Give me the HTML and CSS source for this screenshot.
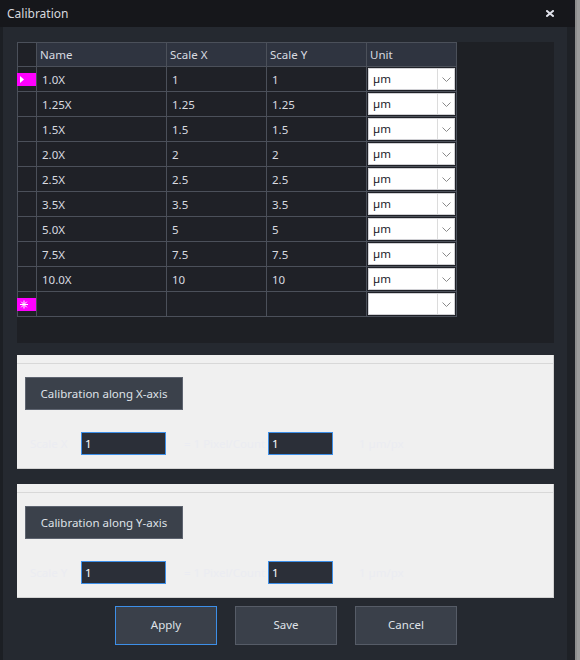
FILE: index.html
```html
<!DOCTYPE html>
<html>
<head>
<meta charset="utf-8">
<link rel="stylesheet" href="styles.css">
</head>
<body>
<div class="window">
  <div class="titlebar">
    <span class="title">Calibration</span>
    <svg class="close" width="8" height="7" viewBox="0 0 8 7"><path d="M1 1 L7 6 M7 1 L1 6" stroke="#dfe1ea" stroke-width="2" stroke-linecap="square"/></svg>
  </div>
  <div class="content">
    <div class="grid-panel">
      <div class="grid">
        <div class="hcell rh"></div>
        <div class="hcell">Name</div>
        <div class="hcell">Scale X</div>
        <div class="hcell">Scale Y</div>
        <div class="hcell">Unit</div>

        <div class="cell rh"><span class="ind"><svg width="19" height="13" viewBox="0 0 19 13"><path d="M3 3 L7 6.5 L3 10 Z" fill="#fff"/></svg></span></div>
        <div class="cell">1.0X</div><div class="cell">1</div><div class="cell">1</div>
        <div class="cell uc"><div class="combo"><span class="cv">µm</span><span class="cb"><svg width="9" height="5" viewBox="0 0 9 5"><path d="M0.5 0.5 L4.5 4.5 L8.5 0.5" fill="none" stroke="#8a8a8a"/></svg></span></div></div>

        <div class="cell rh"></div>
        <div class="cell">1.25X</div><div class="cell">1.25</div><div class="cell">1.25</div>
        <div class="cell uc"><div class="combo"><span class="cv">µm</span><span class="cb"><svg width="9" height="5" viewBox="0 0 9 5"><path d="M0.5 0.5 L4.5 4.5 L8.5 0.5" fill="none" stroke="#8a8a8a"/></svg></span></div></div>

        <div class="cell rh"></div>
        <div class="cell">1.5X</div><div class="cell">1.5</div><div class="cell">1.5</div>
        <div class="cell uc"><div class="combo"><span class="cv">µm</span><span class="cb"><svg width="9" height="5" viewBox="0 0 9 5"><path d="M0.5 0.5 L4.5 4.5 L8.5 0.5" fill="none" stroke="#8a8a8a"/></svg></span></div></div>

        <div class="cell rh"></div>
        <div class="cell">2.0X</div><div class="cell">2</div><div class="cell">2</div>
        <div class="cell uc"><div class="combo"><span class="cv">µm</span><span class="cb"><svg width="9" height="5" viewBox="0 0 9 5"><path d="M0.5 0.5 L4.5 4.5 L8.5 0.5" fill="none" stroke="#8a8a8a"/></svg></span></div></div>

        <div class="cell rh"></div>
        <div class="cell">2.5X</div><div class="cell">2.5</div><div class="cell">2.5</div>
        <div class="cell uc"><div class="combo"><span class="cv">µm</span><span class="cb"><svg width="9" height="5" viewBox="0 0 9 5"><path d="M0.5 0.5 L4.5 4.5 L8.5 0.5" fill="none" stroke="#8a8a8a"/></svg></span></div></div>

        <div class="cell rh"></div>
        <div class="cell">3.5X</div><div class="cell">3.5</div><div class="cell">3.5</div>
        <div class="cell uc"><div class="combo"><span class="cv">µm</span><span class="cb"><svg width="9" height="5" viewBox="0 0 9 5"><path d="M0.5 0.5 L4.5 4.5 L8.5 0.5" fill="none" stroke="#8a8a8a"/></svg></span></div></div>

        <div class="cell rh"></div>
        <div class="cell">5.0X</div><div class="cell">5</div><div class="cell">5</div>
        <div class="cell uc"><div class="combo"><span class="cv">µm</span><span class="cb"><svg width="9" height="5" viewBox="0 0 9 5"><path d="M0.5 0.5 L4.5 4.5 L8.5 0.5" fill="none" stroke="#8a8a8a"/></svg></span></div></div>

        <div class="cell rh"></div>
        <div class="cell">7.5X</div><div class="cell">7.5</div><div class="cell">7.5</div>
        <div class="cell uc"><div class="combo"><span class="cv">µm</span><span class="cb"><svg width="9" height="5" viewBox="0 0 9 5"><path d="M0.5 0.5 L4.5 4.5 L8.5 0.5" fill="none" stroke="#8a8a8a"/></svg></span></div></div>

        <div class="cell rh"></div>
        <div class="cell">10.0X</div><div class="cell">10</div><div class="cell">10</div>
        <div class="cell uc"><div class="combo"><span class="cv">µm</span><span class="cb"><svg width="9" height="5" viewBox="0 0 9 5"><path d="M0.5 0.5 L4.5 4.5 L8.5 0.5" fill="none" stroke="#8a8a8a"/></svg></span></div></div>

        <div class="cell rh"><span class="ind"><svg width="19" height="13" viewBox="0 0 19 13"><path d="M7 2.5 V10.5 M3 6.5 H11 M4.2 3.7 L9.8 9.3 M9.8 3.7 L4.2 9.3" stroke="#fff" stroke-width="1"/></svg></span></div>
        <div class="cell"></div><div class="cell"></div><div class="cell"></div>
        <div class="cell uc"><div class="combo"><span class="cv"></span><span class="cb"><svg width="9" height="5" viewBox="0 0 9 5"><path d="M0.5 0.5 L4.5 4.5 L8.5 0.5" fill="none" stroke="#8a8a8a"/></svg></span></div></div>
      </div>
    </div>

    <div class="cal-panel">
      <button class="cal-btn">Calibration along X-axis</button>
      <div class="in-row">
        <span class="faint l1">Scale X</span>
        <span class="field f1">1</span>
        <span class="faint l2">= 1 Pixel/Count</span>
        <span class="field f2">1</span>
        <span class="faint l3">1 µm/px</span>
      </div>
    </div>

    <div class="cal-panel second">
      <button class="cal-btn">Calibration along Y-axis</button>
      <div class="in-row">
        <span class="faint l1">Scale Y</span>
        <span class="field f1">1</span>
        <span class="faint l2">= 1 Pixel/Count</span>
        <span class="field f2">1</span>
        <span class="faint l3">1 µm/px</span>
      </div>
    </div>

    <div class="actions">
      <button class="act primary">Apply</button>
      <button class="act">Save</button>
      <button class="act">Cancel</button>
    </div>
  </div>
</div>
</body>
</html>
```

FILE: styles.css
```css
html, body {
  margin: 0;
  padding: 0;
}
body {
  width: 580px;
  height: 660px;
  background: #9c9c9c;
  font-family: "Noto Sans", "Open Sans", sans-serif;
  font-size: 11.5px;
  overflow: hidden;
}
.window {
  width: 575px;
  height: 660px;
  background: #252930;
  border-right: 2px solid #8e8e8e;
}
.titlebar {
  height: 27px;
  background: #16171b;
  display: flex;
  align-items: center;
  justify-content: space-between;
  padding: 0 21px 0 7px;
  box-sizing: border-box;
}
.title {
  color: #d6d8de;
  font-size: 12px;
  margin-top: -1px;
}
.close {
  display: block;
  margin-top: -1px;
}
.content {
  height: 633px;
  box-sizing: border-box;
  border-left: 3px solid #1c1f24;
  border-right: 8px solid #1e2126;
  padding: 15px 13px 0 14px;
  display: flex;
  flex-direction: column;
}
.grid-panel {
  width: 537px;
  height: 301px;
  background: #1e2025;
}
.grid {
  display: grid;
  grid-template-columns: 19px 130px 100px 100px 90px;
  grid-auto-rows: 25px;
  grid-template-rows: 24px;
  width: max-content;
  border-left: 1px solid #4b505a;
  border-top: 1px solid #4b505a;
}
.hcell, .cell {
  border-right: 1px solid #4b505a;
  border-bottom: 1px solid #4b505a;
  display: flex;
  align-items: center;
  color: #d9dbe0;
  white-space: nowrap;
}
.hcell {
  background: #2f3440;
  padding-left: 3px;
  padding-bottom: 1px;
}
.cell {
  background: #1f2127;
  padding-left: 5px;
}
.hcell.rh, .cell.rh {
  padding: 0;
}
.hcell.rh { background: #1f2127; }
.ind {
  display: block;
  width: 19px;
  height: 13px;
  margin-left: -1px;
  background: #ff00ff;
}
.ind svg { display: block; }
.cell.uc {
  padding: 0 0 0 1px;
  align-items: flex-start;
}
.combo {
  margin-top: 1px;
  width: 87px;
  height: 22px;
  box-sizing: border-box;
  background: #ffffff;
  border: 1px solid #d0d0d4;
  display: flex;
}
.cv {
  flex: 1;
  color: #1b1b28;
  padding-left: 4px;
  line-height: 20px;
  font-size: 11.5px;
}
.cb {
  width: 16px;
  border-left: 1px solid #dcdcdc;
  display: flex;
  align-items: center;
  justify-content: center;
}
.cb svg { display: block; }

.cal-panel {
  margin-top: 12px;
  width: 537px;
  height: 114px;
  box-sizing: border-box;
  background: #f0f0f0;
  border-right: 1px solid #d2d2d2;
  border-bottom: 1px solid #d2d2d2;
  position: relative;
  padding: 22px 0 0 8px;
}
.cal-panel::before {
  content: "";
  position: absolute;
  left: 0;
  right: 0;
  top: 8px;
  height: 1px;
  background: #d8d8d8;
}
.cal-panel.second {
  margin-top: 15px;
}
.cal-btn {
  display: block;
  width: 158px;
  height: 33px;
  margin: 0;
  padding: 0 0 1px;
  background: #3b414b;
  border: 1px solid #5e6470;
  color: #dfe2e8;
  font-family: inherit;
  font-size: 11.5px;
}
.in-row {
  margin-top: 22px;
  display: flex;
  align-items: center;
  height: 23px;
}
.faint {
  color: #ebecf2;
  font-size: 11.5px;
  flex: none;
  overflow: hidden;
  white-space: nowrap;
}
.l1 { margin-left: 5px; width: 51px; }
.l2 { margin-left: 18px; width: 84px; }
.l3 { margin-left: 26px; }
.field {
  flex: none;
  height: 23px;
  box-sizing: border-box;
  background: #2b2f38;
  border: 1px solid #3d8fe8;
  color: #ffffff;
  padding-left: 3px;
  line-height: 21px;
}
.f1 { width: 85px; }
.f2 { width: 65px; }

.actions {
  margin-top: 8px;
  display: flex;
  gap: 18px;
  padding-left: 98px;
}
.act {
  width: 102px;
  height: 39px;
  margin: 0;
  padding: 0 0 3px;
  background: #3a404a;
  border: 1px solid #565c67;
  color: #dfe2e8;
  font-family: inherit;
  font-size: 11.5px;
}
.act.primary {
  border-color: #3d8fe8;
}
```
